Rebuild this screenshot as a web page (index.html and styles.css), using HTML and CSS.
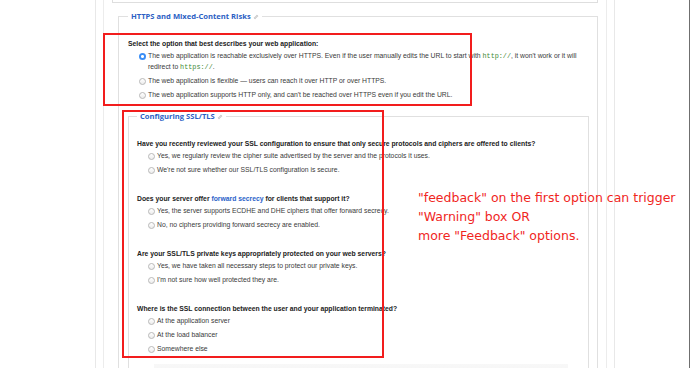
FILE: index.html
```html
<!DOCTYPE html>
<html lang="en">
<head>
    <meta charset="UTF-8">
    <meta name="viewport" content="width=device-width, initial-scale=1.0">
    <title>Security questionnaire</title>
    <link rel="stylesheet" href="styles.css">
</head>
<body>
<div class="screen">
    <div class="frame">
        <div class="inner">
            <div class="prev"></div>

            <fieldset class="section">
                <legend>HTTPS and Mixed-Content Risks <svg class="anchor" viewBox="0 0 10 10"><path d="M4.2 5.8 L5.8 4.2 M3.6 4.6 L2.2 6 a1.4 1.4 0 0 0 1.8 1.8 L5.4 6.4 M6.4 5.4 L7.8 4 a1.4 1.4 0 0 0 -1.8 -1.8 L4.6 3.6"/></svg></legend>

                <div class="group group-top">
                    <p class="q">Select the option that best describes your web application:</p>
                    <label class="opt"><span class="radio on"></span><span>The web application is reachable exclusively over HTTPS. Even if the user manually edits the URL to start with <code>http://</code>, it won't work or it will redirect to <code>https://</code>.</span></label>
                    <label class="opt"><span class="radio"></span><span>The web application is flexible — users can reach it over HTTP or over HTTPS.</span></label>
                    <label class="opt"><span class="radio"></span><span>The web application supports HTTP only, and can't be reached over HTTPS even if you edit the URL.</span></label>
                </div>

                <fieldset class="section sub">
                    <legend>Configuring SSL/TLS <svg class="anchor" viewBox="0 0 10 10"><path d="M4.2 5.8 L5.8 4.2 M3.6 4.6 L2.2 6 a1.4 1.4 0 0 0 1.8 1.8 L5.4 6.4 M6.4 5.4 L7.8 4 a1.4 1.4 0 0 0 -1.8 -1.8 L4.6 3.6"/></svg></legend>

                    <div class="group">
                        <p class="q">Have you recently reviewed your SSL configuration to ensure that only secure protocols and ciphers are offered to clients?</p>
                        <label class="opt"><span class="radio"></span><span>Yes, we regularly review the cipher suite advertised by the server and the protocols it uses.</span></label>
                        <label class="opt"><span class="radio"></span><span>We're not sure whether our SSL/TLS configuration is secure.</span></label>
                    </div>

                    <div class="group">
                        <p class="q">Does your server offer <a href="#">forward secrecy</a> for clients that support it?</p>
                        <label class="opt"><span class="radio"></span><span>Yes, the server supports ECDHE and DHE ciphers that offer forward secrecy.</span></label>
                        <label class="opt"><span class="radio"></span><span>No, no ciphers providing forward secrecy are enabled.</span></label>
                    </div>

                    <div class="group">
                        <p class="q">Are your SSL/TLS private keys appropriately protected on your web servers?</p>
                        <label class="opt"><span class="radio"></span><span>Yes, we have taken all necessary steps to protect our private keys.</span></label>
                        <label class="opt"><span class="radio"></span><span>I'm not sure how well protected they are.</span></label>
                    </div>

                    <div class="group">
                        <p class="q">Where is the SSL connection between the user and your application terminated?</p>
                        <label class="opt"><span class="radio"></span><span>At the application server</span></label>
                        <label class="opt"><span class="radio"></span><span>At the load balancer</span></label>
                        <label class="opt"><span class="radio"></span><span>Somewhere else</span></label>
                    </div>

                    <div class="next-box"></div>
                </fieldset>
            </fieldset>
        </div>
    </div>

    <!-- annotations drawn over the form -->
    <div class="mark mark-top"></div>
    <div class="mark mark-tls"></div>
    <p class="note">"feedback" on the first option can trigger<br>"Warning" box OR<br>more "Feedback" options.</p>
</div>
</body>
</html>
```

FILE: styles.css
```css
body {
    margin: 0;
    background: #fff;
    font-family: "Liberation Sans", Arial, sans-serif;
    color: #333;
}
.screen {
    position: relative;
    width: 690px;
    height: 368px;
    overflow: hidden;
    border-right: 1px solid #6f6f6f;
    box-sizing: border-box;
}
.frame {
    margin-left: 95px;
    width: 520px;
    height: 368px;
    box-sizing: border-box;
    border-left: 1px solid #e8e8e8;
    border-right: 1px solid #e8e8e8;
}
.inner {
    margin: 0 7px;
    height: 100%;
    border-left: 1px solid #ececec;
    border-right: 1px solid #ececec;
}
.prev {
    margin: 0 8px;
    height: 2px;
    border: 1px solid #dedede;
    border-top: 0;
}
.section {
    margin: 7px 8px 0 14px;
    padding: 17px 8px 0 9px;
    border: 1px solid #e0e0e0;
    min-inline-size: 0;
}
.section legend {
    padding: 0 3px;
    font-family: "Open Sans", "Liberation Sans", sans-serif;
    font-weight: 700;
    font-size: 7.6px;
    line-height: 12px;
    color: #2c5fc4;
}
.anchor {
    width: 6px;
    height: 6px;
    vertical-align: -0.5px;
    fill: none;
    stroke: #9a9a9a;
    stroke-width: 0.9;
    stroke-linecap: round;
}
.sub {
    margin: 0;
    padding: 17px 8px 0 8px;
    height: 300px;
}
.group {
    margin-bottom: 16.5px;
}
.group-top {
    margin-bottom: 8px;
}
.q {
    margin: 0;
    font-size: 6.8px;
    line-height: 10.5px;
    font-weight: 700;
    color: #222;
}
.q a {
    color: #2a62c9;
    text-decoration: none;
}
.opt {
    display: flex;
    align-items: flex-start;
    gap: 2px;
    margin-left: 11px;
    padding: 1.75px 0;
    font-size: 6.8px;
    line-height: 10.5px;
    color: #3a3a3a;
}
.radio {
    flex: none;
    width: 7px;
    height: 7px;
    margin-top: 1.75px;
    border-radius: 50%;
    box-sizing: border-box;
    border: 1px solid #b8b8b8;
    background: linear-gradient(#fff, #ececec);
}
.radio.on {
    border: 0;
    background: radial-gradient(circle, #fff 0 1.3px, #3a8ef6 1.6px);
}
code {
    font-family: "Liberation Mono", monospace;
    font-size: 6.8px;
    line-height: 1;
    color: #3f8a35;
}
.next-box {
    margin: -9px 0 0 17px;
    width: 414px;
    height: 20px;
    background: linear-gradient(#f8f8f8, #f0f0f0);
}

/* red annotation boxes */
.mark {
    position: absolute;
    border: 2px solid #f21d1d;
}
.mark-top {
    left: 103px;
    top: 33px;
    width: 365px;
    height: 69px;
}
.mark-tls {
    left: 122px;
    top: 110px;
    width: 258px;
    height: 244px;
}
.note {
    position: absolute;
    left: 418px;
    top: 188px;
    margin: 0;
    font-family: "DejaVu Sans", Verdana, sans-serif;
    font-size: 12.5px;
    line-height: 19px;
    color: #f0261e;
}
```
